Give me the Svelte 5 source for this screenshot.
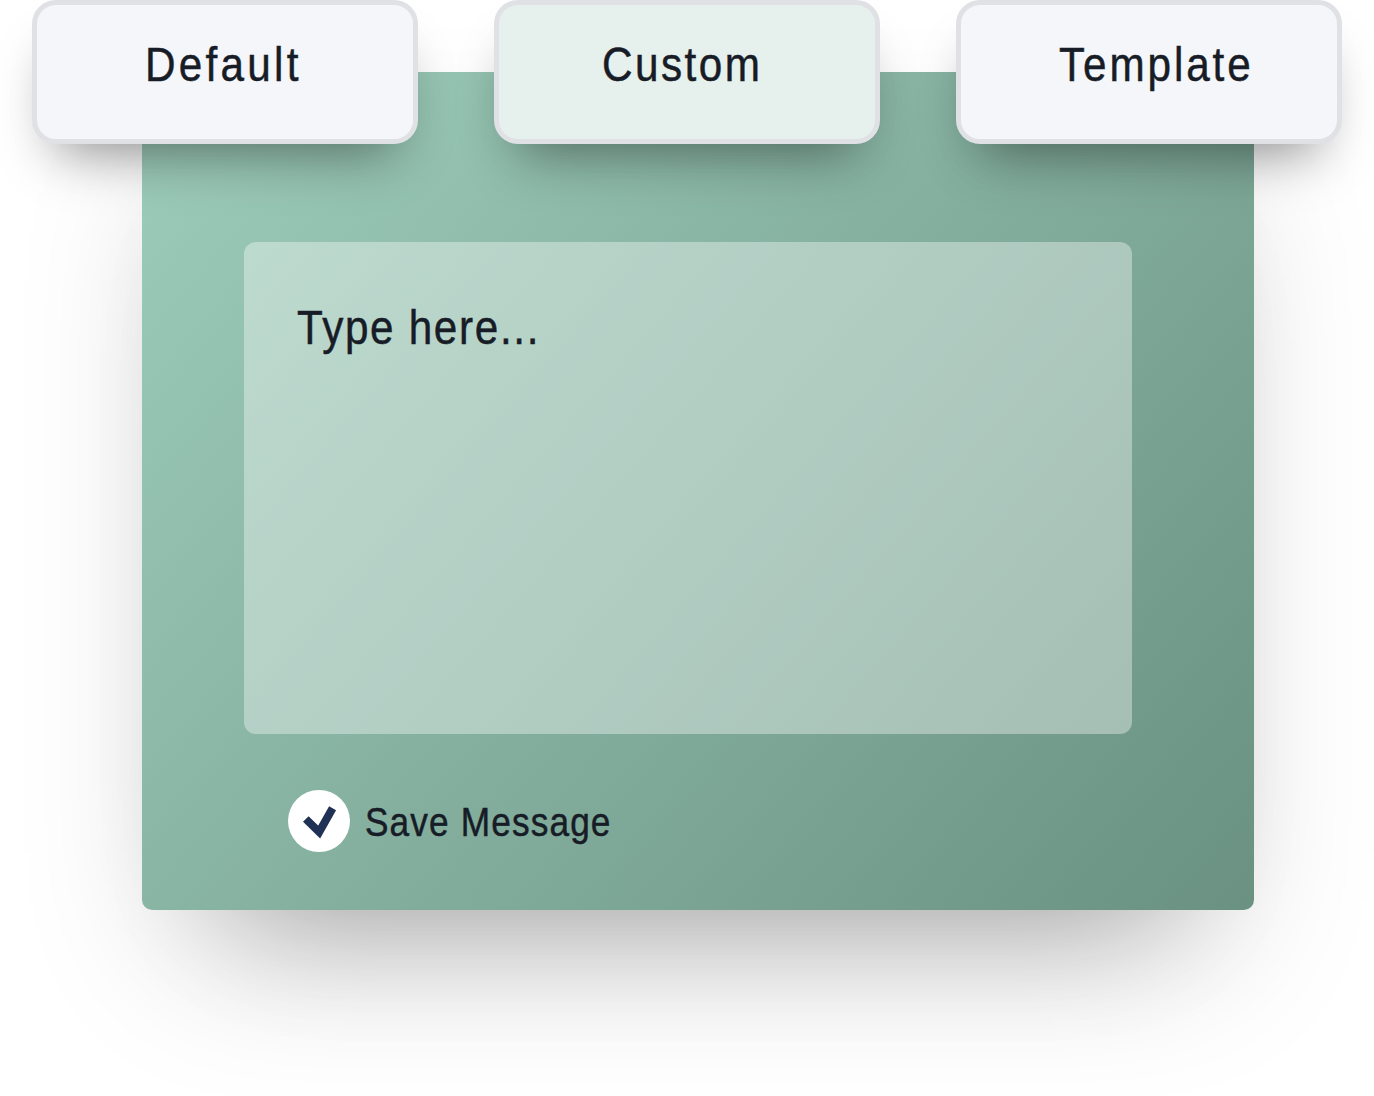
<script lang="ts">
  // scale squeezes the face to a condensed width, spacing opens it up again
  const tabs = [
    { label: 'Default', x: 112.5, spacing: 3.7 },
    { label: 'Custom', x: 107.5, spacing: 2.8 },
    { label: 'Template', x: 102.5, spacing: 3.3 },
  ];

  let active = $state('Custom');
  let save = $state(true);
</script>

<main class="composer">
  <nav class="tabs">
    {#each tabs as tab}
      <button
        class="tab"
        class:active={active === tab.label}
        style="padding-left: {tab.x - 5}px; letter-spacing: {tab.spacing}px"
        onclick={() => (active = tab.label)}
      >
        <span class="narrow">{tab.label}</span>
      </button>
    {/each}
  </nav>

  <section class="panel">
    <div class="editor">
      <span class="narrow">Type here...</span>
    </div>
    <button class="save" onclick={() => (save = !save)}>
      <span class="check">
        {#if save}
          <svg width="62" height="62" viewBox="0 0 62 62">
            <path d="M17.8 29 L31.2 42 L44.6 18.2" fill="none" stroke="#1f3155" stroke-width="8" />
          </svg>
        {/if}
      </span>
      <span class="narrow">Save Message</span>
    </button>
  </section>
</main>

<style>
  :global(body) {
    margin: 0;
    background: #fff;
  }

  .composer {
    box-sizing: border-box;
    width: 1374px;
    height: 1096px;
    overflow: hidden;
    font-family: "Liberation Sans", Arial, sans-serif;
    color: #171c26;
  }

  button {
    font-family: inherit;
    color: inherit;
    cursor: pointer;
  }

  .narrow {
    display: inline-block;
    white-space: nowrap;
    transform: scaleX(0.88);
    transform-origin: left center;
    -webkit-text-stroke: 0.5px #171c26;
  }

  .tabs {
    position: relative;
    z-index: 1;
    display: flex;
    gap: 76px;
    padding: 0 32px;
  }

  .tab {
    box-sizing: border-box;
    width: 386px;
    height: 144px;
    padding: 0 0 15px;
    border: 5px solid #e0e1e5;
    border-radius: 24px;
    background: #f4f6fa;
    font-size: 48px;
    text-align: left;
    box-shadow: 0 32px 60px -18px rgba(0, 0, 0, 0.2), 0 30px 50px -30px rgba(0, 0, 0, 0.33);
  }

  .tab.active {
    background: #e6f0ec;
  }

  .panel {
    box-sizing: border-box;
    width: 1112px;
    height: 838px;
    margin: -72px 0 0 142px;
    padding: 170px 122px 0 102px;
    border-radius: 10px;
    background: linear-gradient(131deg, #9ecdbb 0%, #6a9182 100%);
    box-shadow: 0 76px 150px -44px rgba(0, 0, 0, 0.23), 0 90px 130px -100px rgba(0, 0, 0, 0.24);
  }

  .editor {
    box-sizing: border-box;
    height: 492px;
    padding: 59px 53px;
    border-radius: 12px;
    background: rgba(255, 255, 255, 0.37);
    font-size: 48px;
    line-height: 54px;
    letter-spacing: 1.9px;
  }

  .save {
    display: flex;
    align-items: center;
    gap: 15px;
    margin: 56px 0 0 44px;
    padding: 0;
    border: none;
    background: none;
    font-size: 40px;
    letter-spacing: 1.3px;
  }

  .save .narrow {
    padding-top: 2px;
  }

  .check {
    width: 62px;
    height: 62px;
    border-radius: 50%;
    background: #fff;
  }

  .check svg {
    display: block;
  }
</style>
